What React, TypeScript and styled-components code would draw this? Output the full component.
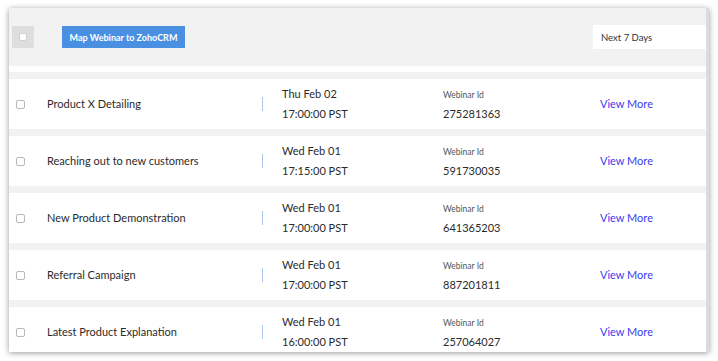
import React from 'react';
import styled, { createGlobalStyle } from 'styled-components';

const GlobalStyle = createGlobalStyle`
    body {
        margin: 0;
        background: #ffffff;
        font-family: 'Lato', 'Open Sans', sans-serif;
        color: #2b2b2b;
    }
`;

const Page = styled.div`
    width: 718px;
    height: 361px;
    padding: 8px 9px 9px 9px;
    box-sizing: border-box;
`;

const Window = styled.div`
    height: 344px;
    background: #f2f2f2;
    border-right: 3px solid #dcdcdc;
    box-shadow: 0 1px 6px rgba(0, 0, 0, 0.4);
    overflow: hidden;
`;

const Toolbar = styled.div`
    height: 58px;
    display: flex;
    align-items: center;
    padding: 0 0 0 3px;
`;

const SelectAll = styled.div`
    width: 22px;
    height: 22px;
    background: #dedede;
    display: flex;
    align-items: center;
    justify-content: center;
    margin-right: 28px;
`;

const Check = styled.span<{ $small?: boolean }>`
    display: block;
    width: ${(p) => (p.$small ? '7px' : '6px')};
    height: ${(p) => (p.$small ? '7px' : '6px')};
    background: #fff;
    border: 1px solid ${(p) => (p.$small ? '#b8b8b8' : '#d0d0d0')};
    border-radius: 2px;
`;

const MapButton = styled.button`
    height: 22px;
    width: 123px;
    padding: 0;
    border: none;
    background: #4a90e2;
    color: #fff;
    font-family: 'Lato', sans-serif;
    font-size: 9px;
    font-weight: 700;
    white-space: nowrap;
    cursor: pointer;
`;

const RangeBox = styled.div`
    margin-left: auto;
    width: 105px;
    height: 24px;
    background: #fff;
    display: flex;
    align-items: center;
    padding-left: 8px;
    font-size: 9.5px;
    color: #333;
`;

const Divider = styled.div`
    height: 6px;
    background: #fff;
`;

const List = styled.div`
    display: flex;
    flex-direction: column;
    gap: 7px;
    padding-top: 7px;
`;

const Row = styled.div`
    height: 50px;
    flex-shrink: 0;
    background: #fff;
    display: grid;
    grid-template-columns: 31px 215px 20px 161px 157px 1fr;
    align-items: center;
    padding-left: 7px;
`;

const Name = styled.div`
    font-size: 11px;
    margin-top: -1px;
`;

const Sep = styled.div`
    width: 1px;
    height: 14px;
    background: #a9c6ec;
`;

const Stack = styled.div`
    display: flex;
    flex-direction: column;
    justify-content: center;
`;

const DateLine = styled.div`
    font-size: 11px;
    line-height: 20px;
`;

const Label = styled.div`
    font-size: 8.5px;
    line-height: 13px;
    color: #555;
    margin-bottom: 5px;
`;

const IdValue = styled.div`
    font-size: 11px;
`;

const ViewMore = styled.a`
    font-size: 11px;
    color: #3b3bf0;
    margin-top: -1px;
    cursor: pointer;
`;

const webinars = [
    { name: 'Product X Detailing', day: 'Thu Feb 02', time: '17:00:00 PST', id: '275281363' },
    { name: 'Reaching out to new customers', day: 'Wed Feb 01', time: '17:15:00 PST', id: '591730035' },
    { name: 'New Product Demonstration', day: 'Wed Feb 01', time: '17:00:00 PST', id: '641365203' },
    { name: 'Referral Campaign', day: 'Wed Feb 01', time: '17:00:00 PST', id: '887201811' },
    { name: 'Latest Product Explanation', day: 'Wed Feb 01', time: '16:00:00 PST', id: '257064027' },
];

export default function App() {
    return (
        <Page>
            <GlobalStyle />
            <Window>
                <Toolbar>
                    <SelectAll>
                        <Check />
                    </SelectAll>
                    <MapButton>Map Webinar to ZohoCRM</MapButton>
                    <RangeBox>Next 7 Days</RangeBox>
                </Toolbar>
                <Divider />
                <List>
                    {webinars.map((w) => (
                        <Row key={w.id}>
                            <Check $small />
                            <Name>{w.name}</Name>
                            <Sep />
                            <Stack>
                                <DateLine>{w.day}</DateLine>
                                <DateLine>{w.time}</DateLine>
                            </Stack>
                            <Stack>
                                <Label>Webinar Id</Label>
                                <IdValue>{w.id}</IdValue>
                            </Stack>
                            <ViewMore>View More</ViewMore>
                        </Row>
                    ))}
                </List>
            </Window>
        </Page>
    );
}
